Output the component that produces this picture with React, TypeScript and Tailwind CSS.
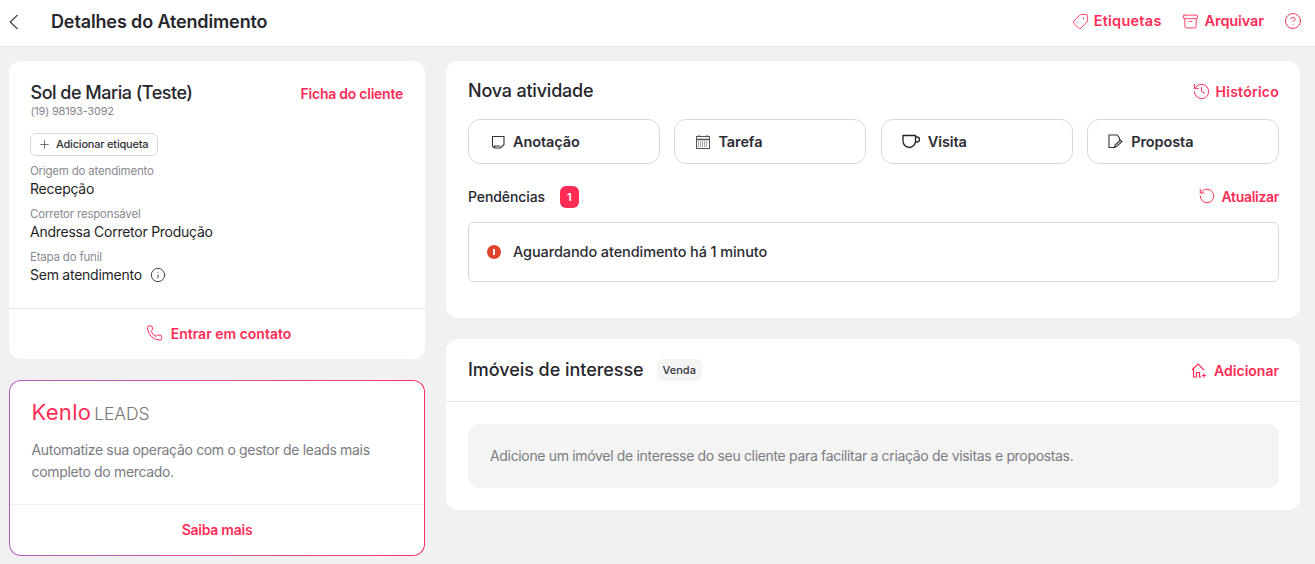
import React from "react";
import { Tag, Archive, CircleHelp, History, RotateCw, Phone, Plus, Info } from "lucide-react";

const PINK = "text-[#ff2d55]";

function BackIcon() {
  return (
    <svg width="9" height="16" viewBox="0 0 9 16" fill="none" stroke="#444" strokeWidth="1.2">
      <path d="M8.5 1L1.2 8l7.3 7" />
    </svg>
  );
}

function NoteIcon() {
  return (
    <svg width="14" height="14" viewBox="0 0 14 14" fill="none" stroke="#333" strokeWidth="1.1">
      <path d="M1.5 1.5h11.5v8l-3.5 3.5H3.5l-2-1.5z" />
      <path d="M3.5 13V11H9.5" />
    </svg>
  );
}

function CalendarIcon() {
  return (
    <svg width="14" height="14" viewBox="0 0 14 14" fill="none" stroke="#555" strokeWidth="1">
      <rect x="0.5" y="1.5" width="13" height="12" />
      <path d="M0.5 4.5h13" strokeWidth="1.6" />
      <path d="M3 0v2M11 0v2" />
      <path d="M2 7h10M2 9h10M2 11h10" strokeDasharray="1 1" />
    </svg>
  );
}

function CupIcon() {
  return (
    <svg width="18" height="15" viewBox="0 0 18 15" fill="none" stroke="#222" strokeWidth="1.3">
      <path d="M1 1.500h12.500v5.500c0 3.500-2.800 6.500-6.200 6.500S1 10.500 1 7z" />
      <path d="M13.500 3h1.500a2 2 0 0 1 0 5h-1.800" />
    </svg>
  );
}

function ProposalIcon() {
  return (
    <svg width="15" height="15" viewBox="0 0 15 15" fill="none" stroke="#333" strokeWidth="1.1">
      <path d="M6 13.500H1V1h8l2.500 3v2.500" />
      <path d="M6.500 13.500l.5-2.500 5.500-5 1.500 1.500-5.500 5z" />
    </svg>
  );
}

function HousePlusIcon() {
  return (
    <svg width="16" height="15" viewBox="0 0 16 15" fill="none" stroke="currentColor" strokeWidth="1.2">
      <path d="M1 7l6-6 6 6" />
      <path d="M2.500 6v8h3v-4.500h3V14h2" />
      <path d="M11 12.500h4M13 10.500v4" />
    </svg>
  );
}

function ActionButton({ icon, label, pad }: { icon: React.ReactNode; label: string; pad: string }) {
  return (
    <button className={`flex h-[45px] items-center gap-2 rounded-xl border border-[#d9d9d9] bg-white ${pad} text-[14.5px] font-semibold tracking-[-0.1px] text-[#2b2b33]`}>
      {icon}
      {label}
    </button>
  );
}

function Field({ label, value, extra }: { label: string; value: string; extra?: React.ReactNode }) {
  return (
    <div className="mt-[7px] first:mt-0">
      <div className="text-[11.5px] leading-[15px] tracking-[-0.2px] text-[#8a8a92]">{label}</div>
      <div className="-mt-[1px] flex items-center gap-[8px] text-[14px] leading-[22px] tracking-[-0.25px] text-[#1f1f26]">
        {value}
        {extra}
      </div>
    </div>
  );
}

export default function App() {
  return (
    <div className="flex h-[564px] w-[1315px] flex-col overflow-hidden bg-[#f1f1f1] font-['Inter','Noto_Sans',sans-serif]">
      <header className="flex h-[47px] shrink-0 items-center border-b border-[#e5e5e5] bg-white pb-[3px] pl-[9px] pr-[13px]">
        <BackIcon />
        <h1 className="ml-[33px] text-[18px] font-semibold tracking-[-0.13px] text-[#26262c]">Detalhes do Atendimento</h1>
        <div className={`ml-auto flex items-center pb-[1px] text-[14.5px] font-semibold ${PINK}`}>
          <Tag className="mr-[5px] size-[17px] -scale-x-100" strokeWidth={1.25} />
          <span className="tracking-[0.25px]">Etiquetas</span>
          <Archive className="ml-[20px] mr-[6px] size-[17px]" strokeWidth={1.25} />
          <span className="tracking-[-0.1px]">Arquivar</span>
          <CircleHelp className="ml-[20px] size-[18px]" strokeWidth={1.25} />
        </div>
      </header>

      <main className="flex flex-1 gap-[21px] pb-2 pl-[9px] pr-[15px] pt-[14px]">
        <aside className="flex w-[416px] shrink-0 flex-col gap-[21px]">
          <section className="flex h-[298px] flex-col rounded-xl bg-white">
            <div className="flex-1 pl-[21px] pr-[22px] pt-[20px]">
              <div className="flex items-start justify-between">
                <div className="pl-[0.5px]">
                  <div className="text-[18px] font-medium leading-[24px] tracking-[-0.5px] text-[#26262c]">Sol de Maria (Teste)</div>
                  <div className="text-[11px] leading-[13px] tracking-[-0.2px] text-[#85858d]">(19) 98193-3092</div>
                </div>
                <a className={`mt-[2px] text-[14px] font-semibold tracking-[-0.25px] ${PINK}`}>Ficha do cliente</a>
              </div>
              <button className="mt-[15px] flex h-[23px] w-[128px] items-center gap-[5px] rounded-md border border-[#d8d8d8] pl-[7px] text-[11px] font-medium tracking-[-0.2px] text-[#33333a]">
                <Plus className="size-[13px]" strokeWidth={1.25} />
                Adicionar etiqueta
              </button>
              <div className="mt-[8px]">
                <Field label="Origem do atendimento" value="Recepção" />
                <Field label="Corretor responsável" value="Andressa Corretor Produção" />
                <Field label="Etapa do funil" value="Sem atendimento" extra={<Info className="size-[16px]" strokeWidth={1.25} />} />
              </div>
            </div>
            <div className={`flex h-[51px] items-center justify-center gap-[8px] border-t border-[#e5e5e5] pb-[2px] pl-[3px] text-[14px] font-semibold ${PINK}`}>
              <Phone className="h-[20px] w-[17px]" strokeWidth={1.4} />
              Entrar em contato
            </div>
          </section>

          <section className="h-[176px] rounded-xl bg-linear-to-r from-[#b45cc0] to-[#f62d62] p-px">
            <div className="flex h-full flex-col rounded-[11px] bg-white">
              <div className="flex-1 pl-[21.5px] pr-[22px] pt-[17px]">
                <div className="flex items-baseline gap-[3px] leading-[28px]">
                  <span className={`text-[22px] font-normal tracking-[0.3px] ${PINK}`}>Kenlo</span>
                  <span className="text-[17.5px] font-light tracking-[-0.1px] text-[#777]">LEADS</span>
                </div>
                <p className="mt-[11px] w-[350px] text-[14px] leading-[22px] tracking-[-0.33px] text-[#7b7b82]">
                  Automatize sua operação com o gestor de leads mais completo do mercado.
                </p>
              </div>
              <div className={`flex h-[51px] items-center justify-center border-t border-[#f1f1f1] pb-[2px] text-[14px] font-semibold tracking-[-0.25px] ${PINK}`}>
                Saiba mais
              </div>
            </div>
          </section>
        </aside>

        <div className="flex flex-1 flex-col gap-[21px]">
          <section className="h-[257px] rounded-xl bg-white pl-[22px] pr-[21px] pt-[17px]">
            <div className="flex items-center justify-between">
              <h2 className="text-[18px] font-medium leading-[26px] tracking-[-0.2px] text-[#26262c]">Nova atividade</h2>
              <div className={`flex items-center gap-[5px] text-[14px] font-semibold tracking-[0.25px] ${PINK}`}>
                <History className="size-[19px]" strokeWidth={1.25} />
                Histórico
              </div>
            </div>
            <div className="mt-[15px] grid grid-cols-4 gap-[14.67px]">
              <ActionButton pad="pl-[22px]" icon={<NoteIcon />} label="Anotação" />
              <ActionButton pad="pl-[21px]" icon={<CalendarIcon />} label="Tarefa" />
              <ActionButton pad="pl-[20px]" icon={<CupIcon />} label="Visita" />
              <ActionButton pad="pl-[20px]" icon={<ProposalIcon />} label="Proposta" />
            </div>
            <div className="mt-[22px] flex h-[22px] items-center">
              <span className="pb-[2px] text-[14px] font-medium tracking-[-0.1px] text-[#26262c]">Pendências</span>
              <span className="ml-[15px] flex h-[22px] w-[19px] items-center justify-center rounded-md bg-[#ff2d55] text-[11px] font-semibold text-white">1</span>
              <div className={`ml-auto flex items-center gap-[5px] pb-[2px] text-[14px] font-semibold tracking-[-0.3px] ${PINK}`}>
                <RotateCw className="size-[18px] -scale-x-100" strokeWidth={1.25} />
                Atualizar
              </div>
            </div>
            <div className="mt-[14px] flex h-[60px] items-center gap-[12px] rounded-md border border-[#d9d9d9] pb-[1px] pl-[18px]">
              <span className="flex size-[14px] items-center justify-center rounded-full bg-[#e0452c]">
                <span className="h-[6px] w-[1.5px] bg-white" />
              </span>
              <span className="text-[14.5px] font-medium tracking-[-0.1px] text-[#2b2b33]">Aguardando atendimento há 1 minuto</span>
            </div>
          </section>

          <section className="h-[171px] rounded-xl bg-white">
            <div className="flex h-[63px] items-center border-b border-[#e5e5e5] pl-[22px] pr-[21px]">
              <h2 className="pb-[2px] text-[18px] font-medium tracking-[-0.05px] text-[#26262c]">Imóveis de interesse</h2>
              <span className="ml-[13px] flex h-[22px] items-center rounded-md bg-[#f4f4f4] px-[6px] text-[11px] font-medium text-[#33333a]">Venda</span>
              <div className={`ml-auto flex items-center gap-[7px] text-[14px] font-semibold ${PINK}`}>
                <HousePlusIcon />
                Adicionar
              </div>
            </div>
            <div className="ml-[22px] mr-[21px] mt-[22px] flex h-[64px] items-center rounded-xl bg-[#f4f4f4] px-[22px] pb-[1px] text-[14px] tracking-[-0.33px] text-[#7b7b82]">
              Adicione um imóvel de interesse do seu cliente para facilitar a criação de visitas e propostas.
            </div>
          </section>
        </div>
      </main>
    </div>
  );
}
